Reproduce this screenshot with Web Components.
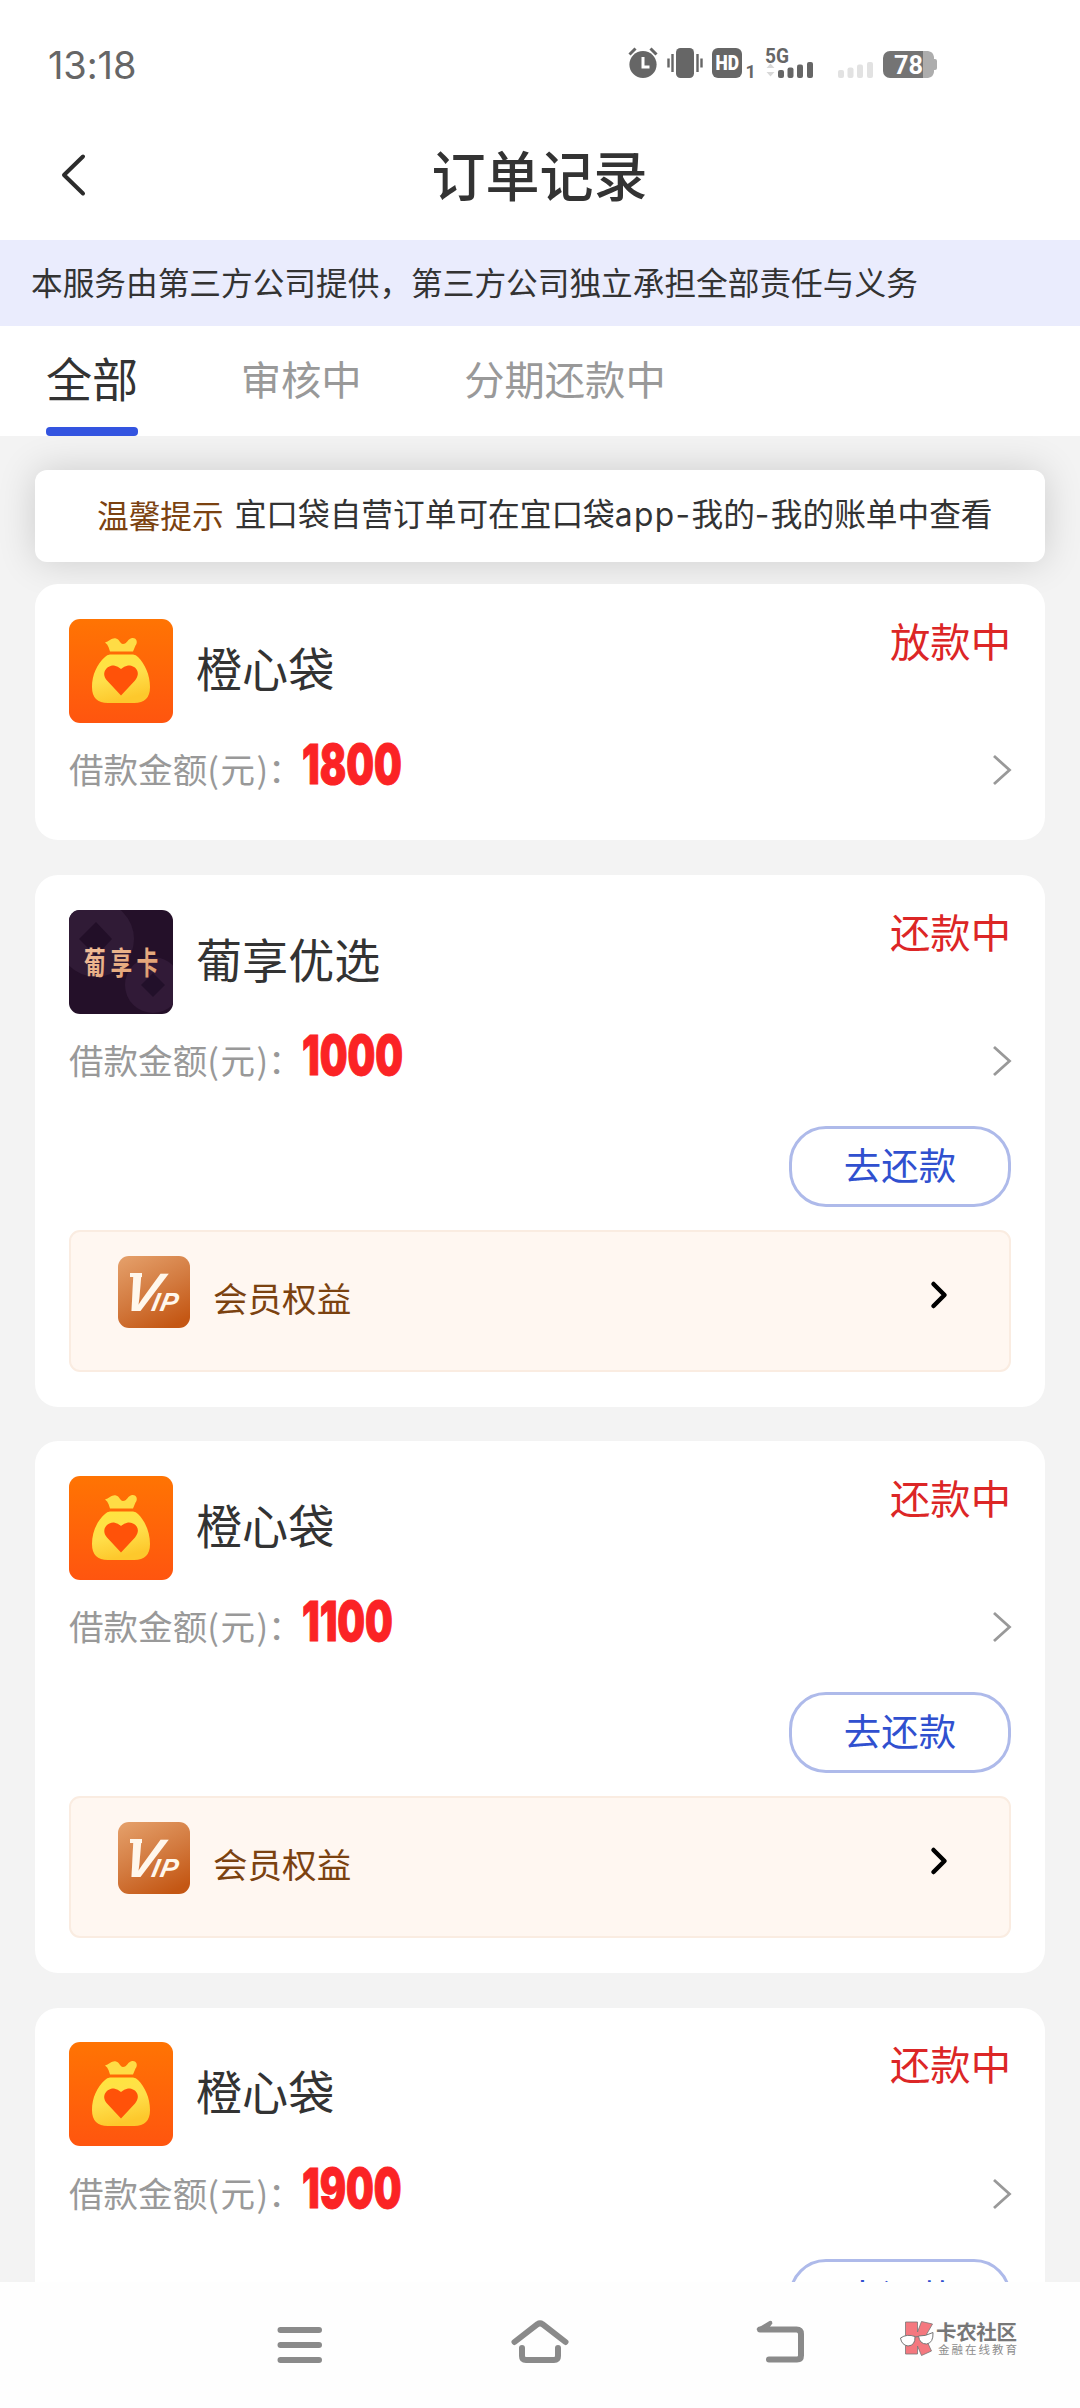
<!DOCTYPE html>
<html lang="zh-CN">
<head>
<meta charset="utf-8">
<title>订单记录</title>
<style>
html,body{margin:0;padding:0}
body{width:1080px;height:2408px;overflow:hidden;background:#f3f3f3;font-family:"Noto Sans CJK SC","Noto Sans",sans-serif;color:#333}
</style>
</head>
<body>
<order-app></order-app>
<script>
const define = (name, html) => {
  const t = document.createElement('template');
  t.innerHTML = html;
  customElements.define(name, class extends HTMLElement {
    constructor() {
      super();
      this.attachShadow({ mode: 'open' }).appendChild(t.content.cloneNode(true));
    }
  });
};

define('status-bar', `
<style>
:host{display:flex;justify-content:space-between;height:110px;padding:0 140px 0 48px;box-sizing:border-box;background:#fff}
time{margin-top:42px;font:400 38px/46px Inter,sans-serif;color:#666;letter-spacing:-.1px}
svg{display:block;margin-top:44px}
</style>
<time>13:18</time>
<svg width="312" height="40" viewBox="0 0 312 40">
  <g fill="#666">
    <circle cx="15" cy="20.5" r="13.6"/>
    <path d="M1.500 10.500l6-6M28.500 10.500l-6-6" stroke="#666" stroke-width="3" />
    <rect x="48" y="4" width="18" height="30" rx="4.500"/>
    <path d="M44.500 10v18M40.500 14.500v9M69.500 10v18M73.500 14.500v9" stroke="#666" stroke-width="2.400"/>
    <rect x="84" y="4" width="30" height="30" rx="6"/>
    <text x="117.500" y="34" font-family="Roboto" font-weight="700" font-size="18">1</text>
    <text x="137" y="19" font-family="Roboto" font-weight="700" font-size="21" textLength="24" lengthAdjust="spacingAndGlyphs">5G</text>
    <rect x="150" y="26" width="6" height="8" rx="2"/><rect x="159.500" y="23.500" width="6" height="10.500" rx="2"/><rect x="169" y="20.500" width="6" height="13.500" rx="2"/><rect x="179" y="18" width="6" height="16" rx="2"/>
  </g>
  <path d="M15 13v10h6.500" fill="none" stroke="#fff" stroke-width="3"/>
  <text x="87.500" y="26" font-family="Roboto" font-weight="900" font-size="20" fill="#fff" textLength="23.500" lengthAdjust="spacingAndGlyphs">HD</text>
  <path d="M138.500 24l4-4.500 4 4.500zM138.500 28l4 4.500 4-4.500z" fill="#d8d8d8"/>
  <g fill="#e2e2e2"><rect x="210" y="26" width="6" height="8" rx="2"/><rect x="219.500" y="23.500" width="6" height="10.500" rx="2"/><rect x="229" y="20.500" width="6" height="13.500" rx="2"/><rect x="239" y="18" width="6" height="16" rx="2"/></g>
  <path d="M295 7h5a7 7 0 0 1 6 6v2h1q2 0 2 2v7q0 2-2 2h-1v2a7 7 0 0 1-6 6h-5z" fill="#adadad"/>
  <path d="M262 7h33v27h-33a7 7 0 0 1-7-7v-13a7 7 0 0 1 7-7z" fill="#747474"/>
  <text x="266" y="30" font-family="Roboto" font-weight="700" font-size="25" fill="#fff" textLength="29" lengthAdjust="spacingAndGlyphs">78</text>
</svg>`);

define('page-header', `
<style>
:host{display:grid;grid-template-columns:1fr auto 1fr;align-items:center;height:130px;padding:0 60px 0 59px;box-sizing:border-box;background:#fff}
svg{display:block}
h1{margin:0 0 3px;font-size:54px;line-height:70px;font-weight:500;color:#333}
</style>
<svg width="30" height="50" viewBox="0 0 30 50"><path d="M24 6.500L5 25l19 18.500" fill="none" stroke="#2c2c2c" stroke-width="4" stroke-linecap="round" stroke-linejoin="round"/></svg>
<h1><slot></slot></h1>`);

define('notice-bar', `
<style>:host{display:flex;align-items:center;height:86px;padding:0 0 5px 31px;box-sizing:border-box;background:#eaecfd;color:#333;font-size:31.680px;line-height:46px;white-space:nowrap}</style>
<slot></slot>`);

define('tab-bar', `
<style>:host{display:flex;gap:102.500px;height:110px;padding-left:46px;box-sizing:border-box;background:#fff;position:relative;z-index:1}</style>
<slot></slot>`);

define('tab-item', `
<style>
:host{display:flex;flex-direction:column;justify-content:space-between;height:110px;font-size:40.320px;color:#999;white-space:nowrap}
span{line-height:60px;margin-top:22px}
i{display:none;height:9px;border-radius:4px;background:#3354e0}
:host([active]){font-size:46.080px;color:#333}
:host([active]) span{margin-top:21px}
:host([active]) i{display:block}
</style>
<span><slot></slot></span><i></i>`);

define('tip-card', `
<style>
:host{display:flex;align-items:center;justify-content:flex-start;gap:11px;height:92px;margin:34px 35px 22px;padding:0 0 5px 62px;box-sizing:border-box;background:#fff;border-radius:12px;box-shadow:0 0 38px rgba(0,0,0,.16);font-size:31.680px;line-height:46px;white-space:nowrap;color:#333}
b{font-weight:400;color:#7b4210}
</style>
<b><slot name="lead"></slot></b><span><slot></slot></span>`);

define('bag-logo', `
<style>:host{display:block;width:104px;height:104px}svg{display:block}</style>
<svg width="104" height="104" viewBox="0 0 104 104">
  <defs>
    <linearGradient id="o" x1="0" y1="0" x2="0" y2="1"><stop offset="0" stop-color="#ff7403"/><stop offset="1" stop-color="#ff550f"/></linearGradient>
    <linearGradient id="y" x1="0" y1="0" x2=".3" y2="1"><stop offset="0" stop-color="#ffe53d"/><stop offset=".55" stop-color="#ffdf4a"/><stop offset="1" stop-color="#fdc82c"/></linearGradient>
  </defs>
  <rect width="104" height="104" rx="11" fill="url(#o)"/>
  <path d="M36 23.500C40 22.500 43 18.500 47 19.500C51 20.500 51 25 54 25C58 25 59 19.500 63 19C68 18.500 69 23.500 66.500 26.500L64 32.500H41L39.500 28Q38.500 25 36 23.500Z" fill="#ffdc45"/>
  <path d="M41 35.500H64Q67 35.500 69 38C76 45 81 56 81 68Q81 84 65 84H39Q23 84 23 68C23 56 28 45 36 38Q38 35.500 41 35.500Z" fill="url(#y)"/>
  <path d="M52 76.500L38 61.500C31 53 39 46 45 46.500Q49 47 52 50Q55 47 59 46.500C66 46 73 53 66 61.500Z" fill="#ff5209"/>
</svg>`);

define('grape-logo', `
<style>:host{display:block;width:104px;height:104px}svg{display:block}</style>
<svg width="104" height="104" viewBox="0 0 104 104">
  <defs>
    <clipPath id="c"><rect width="104" height="104" rx="11"/></clipPath>
    <linearGradient id="g" x1="0" y1="0" x2="1" y2="1"><stop offset="0" stop-color="#f3c3a0"/><stop offset="1" stop-color="#dd9a69"/></linearGradient>
  </defs>
  <g clip-path="url(#c)">
    <rect width="104" height="104" fill="#241029"/>
    <circle cx="27" cy="29" r="38" fill="#301b36"/><path d="M10 29L27 12L43 29L27 46Z" fill="#220f28"/>
    <circle cx="84" cy="75" r="28" fill="#311a37"/><path d="M72 75L84 63L96 75L84 87Z" fill="#22102a"/>
  </g>
  <g transform="translate(15 0) scale(.7 1)" font-size="31" font-weight="700" fill="url(#g)"><text x="0 38 75" y="64">葡享卡</text></g>
</svg>`);

define('vip-row', `
<style>
:host{display:flex;align-items:flex-start;height:142px;margin-top:23px;padding:24px 60px 0 47px;box-sizing:border-box;border:2px solid #faece1;border-radius:11px;background:#fff7f1}
svg{display:block}
span{flex:1;margin:16px 0 0 23px;font-size:34.560px;line-height:50px;color:#7b4210}
.a{margin-top:22px}
</style>
<svg width="72" height="72" viewBox="0 0 72 72">
  <defs><linearGradient id="v" x1=".2" y1="0" x2=".7" y2="1"><stop offset="0" stop-color="#e39c66"/><stop offset=".5" stop-color="#d37b40"/><stop offset="1" stop-color="#c45714"/></linearGradient></defs>
  <rect width="72" height="72" rx="11" fill="url(#v)"/>
  <path d="M12 17H24V21H12Z" fill="#fff7ec"/>
  <g transform="translate(0 55) skewX(-12)" font-family="Liberation Sans" font-weight="700" font-style="italic" fill="#fff7ec">
    <text x="3 32.500 41" y="0" font-size="54">V<tspan font-size="26">IP</tspan></text>
  </g>
</svg>
<span><slot></slot></span>
<svg class="a" width="20" height="34" viewBox="0 0 20 34"><path d="M4.500 6L15.500 17L4.500 28" fill="none" stroke="#000" stroke-width="4.500" stroke-linecap="round" stroke-linejoin="round"/></svg>`);

define('repay-button', `
<style>
:host{display:flex;justify-content:flex-end;margin-top:29.500px}
button{width:222px;height:81px;padding:0 0 6px;box-sizing:border-box;border:3px solid #aebaea;border-radius:37px;background:#fff;color:#3050cf;font:400 37.440px/50px "Noto Sans CJK SC",sans-serif}
</style>
<button><slot></slot></button>`);

define('order-card', `
<style>
:host{display:block;flex:none;margin:0 35px 34.800px;padding:34.500px 34px;box-sizing:border-box;background:#fff;border-radius:23px}
.head{display:flex;align-items:flex-start;height:104px}
h2{flex:1;margin:16px 0 0 23px;font-size:46.080px;line-height:64px;font-weight:400;color:#333}
.state{font-size:40.320px;line-height:44px;margin:-1px 0 0;color:#dc2626}
.row{display:flex;align-items:center;height:83px}
.label{font-size:34.560px;line-height:50px;padding-top:8px;color:#999;white-space:nowrap}
.label span{margin:0 1.500px}
.sum{flex:1;font:900 55px/60px Inter,sans-serif;color:#fb2325;-webkit-text-stroke:1px #fb2325;transform:scaleX(.71);transform-origin:0 50%;margin-left:-1px}
svg{display:block;margin:12px -1px 0 0}
</style>
<div class="head"><slot name="logo"></slot><h2><slot name="name"></slot></h2><div class="state"><slot name="state"></slot></div></div>
<div class="row"><div class="label">借款金额(<span>元</span>)：</div><div class="sum"><slot name="sum"></slot></div>
<svg width="20" height="32" viewBox="0 0 20 32"><path d="M2 2L17.500 16L2 30" fill="none" stroke="#999" stroke-width="2.800"/></svg></div>
<slot></slot>`);

define('nav-bar', `
<style>
:host{display:grid;grid-template-columns:277px 45px 189px 58px 186px 50px 94px auto;align-items:start;height:126px;background:#fefefe;position:relative;z-index:1}
svg{display:block;margin-top:36px}
svg.k{margin-top:37px}
.n{fill:none;stroke:#8a8a8a;stroke-width:6;stroke-linecap:round;stroke-linejoin:round}
</style>
<i></i>
<svg width="46" height="50" viewBox="0 0 46 50"><path class="n" d="M3.500 12H42M3.500 27H42M3.500 42H42"/></svg>
<i></i>
<svg width="58" height="50" viewBox="0 0 58 50"><path class="n" d="M3.500 24L26.500 6.200Q29 4.500 31.500 6.200L54.500 24M11 30V38Q11 42 15 42H43Q47 42 47 38V30"/></svg>
<i></i>
<svg width="50" height="50" viewBox="0 0 50 50"><path class="n" d="M14 41.500H42Q46 41.500 46 37.500V16Q46 11.500 41.500 11.500H5"/><path d="M1 11.200L14.500 3q3-.7 2.800 2.500L13 11.500z" fill="#8a8a8a"/></svg>
<i></i>
<svg class="k" width="122" height="40" viewBox="0 0 122 40">
  <path d="M6.500 3H18.500V13L22.500 2.500L33.500 5L26 18L32.500 32L22.500 36.500L18.500 27V35H6.500Z" fill="#f4787f" stroke="#777" stroke-width=".8"/>
  <g fill="#fff" stroke="#777" stroke-width="1"><path d="M1.500 19Q8 14.500 16 17.500Q16.500 26.500 9 27Q2.500 26 1.500 19Z"/><path d="M19.500 17Q26 17.500 34 13.500Q34.500 24 27.500 25Q20.500 25 19.500 17Z"/><path d="M16 18L19.500 17.500"/></g>
  <text x="37" y="20.500" font-size="20.500" font-weight="700" fill="#777" textLength="81">卡农社区</text>
  <text x="39" y="34.500" font-size="11.500" fill="#8c8c8c" textLength="79">金融在线教育</text>
</svg>`);

define('order-app', `
<style>
:host{display:flex;flex-direction:column;width:1080px;height:2408px;overflow:hidden;background:#f3f3f3}
main{flex:1;min-height:0;overflow:hidden}
.plain{margin-bottom:35px;height:256px}
.last{padding-bottom:60px}
.lat{font-family:Inter,sans-serif;letter-spacing:1.400px}
</style>
<status-bar></status-bar>
<page-header>订单记录</page-header>
<notice-bar>本服务由第三方公司提供，第三方公司独立承担全部责任与义务</notice-bar>
<tab-bar><tab-item active>全部</tab-item><tab-item>审核中</tab-item><tab-item>分期还款中</tab-item></tab-bar>
<main>
  <tip-card><span slot="lead">温馨提示</span>宜口袋自营订单可在宜口袋<span class="lat">app-</span>我的<span class="lat">-</span>我的账单中查看</tip-card>
  <order-card class="plain"><bag-logo slot="logo"></bag-logo><span slot="name">橙心袋</span><span slot="state">放款中</span><span slot="sum">1800</span></order-card>
  <order-card><grape-logo slot="logo"></grape-logo><span slot="name">葡享优选</span><span slot="state">还款中</span><span slot="sum">1000</span><repay-button>去还款</repay-button><vip-row>会员权益</vip-row></order-card>
  <order-card><bag-logo slot="logo"></bag-logo><span slot="name">橙心袋</span><span slot="state">还款中</span><span slot="sum">1100</span><repay-button>去还款</repay-button><vip-row>会员权益</vip-row></order-card>
  <order-card class="last"><bag-logo slot="logo"></bag-logo><span slot="name">橙心袋</span><span slot="state">还款中</span><span slot="sum">1900</span><repay-button>去还款</repay-button></order-card>
</main>
<nav-bar></nav-bar>`);
</script>
</body>
</html>
